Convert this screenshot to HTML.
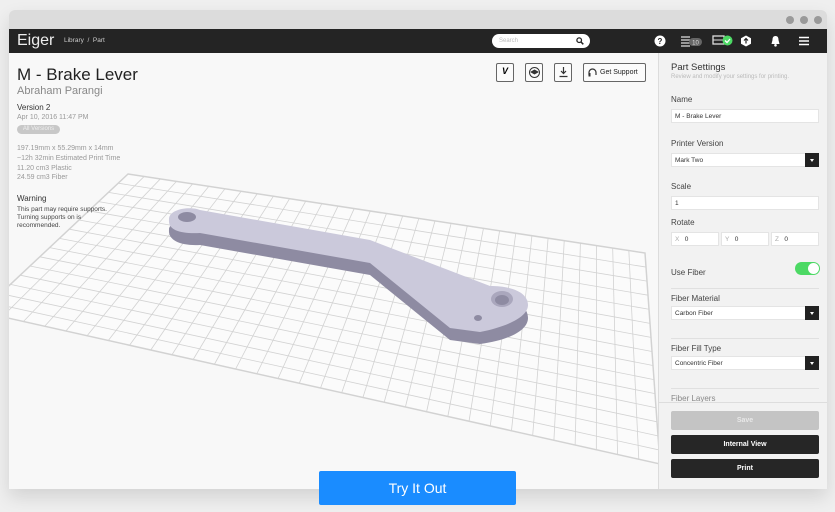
<!DOCTYPE html>
<html><head><meta charset="utf-8"><style>
*{margin:0;padding:0;box-sizing:border-box}
body{width:835px;height:512px;background:#efefef;font-family:"Liberation Sans",sans-serif;position:relative;overflow:hidden}
.win{position:absolute;left:9px;top:10px;width:818px;height:479px;background:#f8f8f8;border-radius:6px 6px 0 0;overflow:hidden;box-shadow:0 8px 18px rgba(0,0,0,.12)}
.title{position:absolute;left:0;top:0;width:818px;height:19px;background:#dcdcdc}
.dot{position:absolute;top:6px;width:8px;height:8px;border-radius:50%;background:#9a9a9a}
.nav{position:absolute;left:0;top:19px;width:818px;height:24px;background:#242424;color:#fff}
.a{position:absolute;white-space:nowrap}
.panel{position:absolute;left:649px;top:43px;width:169px;height:436px;background:#f2f2f2;border-left:1px solid #dcdcdc}
.lbl{position:absolute;left:12px;font-size:8px;color:#444}
.inp{position:absolute;left:12px;width:148px;height:14px;background:#fff;border:1px solid #e4e4e4;font-size:6.5px;color:#333;padding:3px 3px}
.arr{position:absolute;right:-1px;top:-1px;width:14px;height:14px;background:#222}
.arr:after{content:"";position:absolute;left:5px;top:6px;border:2px solid transparent;border-top:3px solid #fff}
.hr{position:absolute;left:12px;width:148px;height:1px;background:#e0e0e0}
.btn{position:absolute;left:12px;width:148px;height:19px;font-size:7px;color:#fff;text-align:center;line-height:19px;font-weight:bold;border-radius:2px}
.tb{position:absolute;top:53px;width:18px;height:19px;border:1px solid #666;border-radius:2px;background:#fbfbfb}
.g{font-size:7px;color:#999}
</style></head><body>
<div class="win">
<div class="title"><div class="dot" style="left:777px"></div><div class="dot" style="left:791px"></div><div class="dot" style="left:805px"></div></div>
<div class="nav">
<div class="a" style="left:8px;top:3px;font-size:16px;color:#eee">Eiger</div>
<div class="a" style="left:55px;top:8px;font-size:6.5px;color:#ccc">Library &nbsp;/&nbsp; Part</div>
<div class="a" style="left:483px;top:5px;width:98px;height:14px;background:#fff;border-radius:7px;font-size:6px;color:#bbb;padding:4px 7px">Search
<svg style="position:absolute;right:6px;top:3px" width="8" height="8" viewBox="0 0 8 8"><circle cx="3.2" cy="3.2" r="2.3" fill="none" stroke="#222" stroke-width="1.3"/><path d="M5 5L7.3 7.3" stroke="#222" stroke-width="1.5"/></svg></div>
<svg class="a" style="left:645px;top:6px" width="12" height="12"><circle cx="6" cy="6" r="5.5" fill="#fff"/><text x="6" y="9" font-size="8" font-weight="bold" text-anchor="middle" fill="#222" font-family="Liberation Sans">?</text></svg>
<svg class="a" style="left:671px;top:6px" width="24" height="12"><path d="M1 2h9M1 5h9M1 8h9M1 11h9" stroke="#ddd" stroke-width="1.3"/><rect x="9" y="3" width="13" height="8" rx="4" fill="#666"/><text x="15.5" y="9.5" font-size="6" text-anchor="middle" fill="#ddd" font-family="Liberation Sans">10</text></svg>
<svg class="a" style="left:703px;top:5px" width="22" height="13"><rect x="1" y="2" width="11" height="8" fill="none" stroke="#ddd" stroke-width="1.3"/><path d="M1 6h11" stroke="#ddd"/><circle cx="15.5" cy="6.5" r="5" fill="#4cd964"/><path d="M13 6.5l2 2 3-3.5" stroke="#fff" stroke-width="1.3" fill="none"/></svg>
<svg class="a" style="left:731px;top:6px" width="12" height="12"><path d="M6 0.5L11 3.2V8.8L6 11.5L1 8.8V3.2Z" fill="#fff"/><path d="M6 3.5v5M4 5.5l2-2 2 2" stroke="#222" stroke-width="1.2" fill="none"/></svg>
<svg class="a" style="left:761px;top:6px" width="11" height="12"><path d="M5.5 1C3 1 2.5 3 2.5 5L1.5 9H9.5L8.5 5C8.5 3 8 1 5.5 1Z" fill="#fff"/><circle cx="5.5" cy="10.3" r="1.3" fill="#fff"/></svg>
<svg class="a" style="left:790px;top:7px" width="10" height="10"><path d="M0 1.5h10M0 5h10M0 8.5h10" stroke="#fff" stroke-width="1.6"/></svg>
</div>

<svg class="a" style="left:0;top:43px" width="650" height="436"><g transform="translate(-9,-53)">
<polygon points="128,174 645,253 660,464 -19,312" fill="#fbfbfb" stroke="#d4d4d4" stroke-width="1.5"/>
<g id="gl" stroke="#d2d2d2" stroke-width="0.8"></g>
<path d="M169,230 C168,221 190,219 200,222 L 370,252 L 490,298 C515,298 528,306 528,318 C528,330 510,340 480,344 L 450,340 L 370,275 L 200,245 C180,246 168,240 169,230 Z" fill="#8e8ba2"/>
<path d="M169,220 C168,209 190,206 200,210 L 370,240 L 490,286 C515,286 528,294 528,305 C528,316 510,326 480,332 L 450,328 L 370,263 L 200,233 C180,234 168,230 169,220 Z" fill="#cbc9db"/>
<ellipse cx="187" cy="217" rx="9" ry="5" fill="#8e8ba2"/><ellipse cx="502" cy="299" rx="11" ry="8" fill="#aaa7bd"/><ellipse cx="502" cy="300" rx="7" ry="5" fill="#8e8ba2"/><ellipse cx="478" cy="318" rx="4" ry="3" fill="#8e8ba2"/>
</g></svg>

<div class="a" style="left:8px;top:55px;font-size:17px;color:#222">M - Brake Lever</div>
<div class="a" style="left:8px;top:75px;font-size:11px;color:#888">Abraham Parangi</div>
<div class="a" style="left:8px;top:93px;font-size:8px;color:#333">Version 2</div>
<div class="a g" style="left:8px;top:104px">Apr 10, 2016 11:47 PM</div>
<div class="a" style="left:8px;top:115px;width:43px;height:9px;border-radius:5px;background:#c8c8c8;color:#eee;font-size:6px;text-align:center;line-height:9px">All Versions</div>
<div class="a g" style="left:8px;top:134px;line-height:9.8px">197.19mm x 55.29mm x 14mm<br>~12h 32min Estimated Print Time<br>11.20 cm3 Plastic<br>24.59 cm3 Fiber</div>
<div class="a" style="left:8px;top:184px;font-size:8px;color:#333">Warning</div>
<div class="a" style="left:8px;top:196px;font-size:6.5px;color:#444;line-height:8px">This part may require supports.<br>Turning supports on is<br>recommended.</div>

<div class="tb" style="left:487px"><span style="position:absolute;left:5px;top:2px;font-size:9px;font-weight:bold;font-style:italic">V</span></div>
<div class="tb" style="left:516px"><svg style="position:absolute;left:3px;top:3px" width="11" height="11"><circle cx="5.5" cy="5.5" r="5" fill="none" stroke="#333"/><path d="M1 5l4.5-2.5 4.5 2.5-4.5 2.5z" fill="#333"/></svg></div>
<div class="tb" style="left:545px"><svg style="position:absolute;left:4px;top:3px" width="9" height="11"><path d="M4.5 0v6M2 4l2.5 2.5L7 4M0.5 9.5h8" stroke="#333" stroke-width="1.2" fill="none"/></svg></div>
<div class="tb" style="left:574px;width:63px;font-size:7px;line-height:17px;padding-left:16px;color:#222">Get Support<svg style="position:absolute;left:4px;top:4px" width="9" height="9"><path d="M1 7V4.5a3.5 3.5 0 0 1 7 0V7" fill="none" stroke="#333" stroke-width="1.2"/><rect x="0.5" y="5" width="2" height="3.5" fill="#333"/></svg></div>

<div class="panel">
<div class="a" style="left:12px;top:9px;font-size:9.5px;color:#333">Part Settings</div>
<div class="a" style="left:12px;top:21px;font-size:6px;color:#bbb">Review and modify your settings for printing.</div>
<div class="lbl" style="top:42px">Name</div>
<div class="inp" style="top:56px">M - Brake Lever</div>
<div class="lbl" style="top:86px">Printer Version</div>
<div class="inp" style="top:100px">Mark Two<div class="arr"></div></div>
<div class="lbl" style="top:129px">Scale</div>
<div class="inp" style="top:143px">1</div>
<div class="lbl" style="top:165px">Rotate</div>
<div class="inp" style="top:179px;width:48px;color:#333"><span style="color:#aaa">X</span>&nbsp;&nbsp;&nbsp;0</div>
<div class="inp" style="top:179px;left:62px;width:48px"><span style="color:#aaa">Y</span>&nbsp;&nbsp;&nbsp;0</div>
<div class="inp" style="top:179px;left:112px;width:48px"><span style="color:#aaa">Z</span>&nbsp;&nbsp;&nbsp;0</div>
<div class="lbl" style="top:215px">Use Fiber</div>
<div class="a" style="left:136px;top:209px;width:25px;height:13px;border-radius:7px;background:#4cd964"><div style="position:absolute;right:1px;top:1px;width:11px;height:11px;border-radius:50%;background:#fff"></div></div>
<div class="hr" style="top:235px"></div>
<div class="lbl" style="top:241px">Fiber Material</div>
<div class="inp" style="top:253px">Carbon Fiber<div class="arr"></div></div>
<div class="hr" style="top:285px"></div>
<div class="lbl" style="top:291px">Fiber Fill Type</div>
<div class="inp" style="top:303px">Concentric Fiber<div class="arr"></div></div>
<div class="hr" style="top:335px"></div>
<div class="lbl" style="top:341px;color:#888">Fiber Layers</div>
<div class="a" style="left:0;top:349px;width:169px;height:87px;background:#f2f2f2;border-top:1px solid #ddd"></div>
<div class="btn" style="top:358px;background:#c4c4c4;color:#e8e8e8">Save</div>
<div class="btn" style="top:382px;background:#262626">Internal View</div>
<div class="btn" style="top:406px;background:#262626">Print</div>
</div>
</div>
<div class="a" style="left:319px;top:471px;width:197px;height:34px;background:#1a8cff;border-radius:2px;color:#fff;font-size:14px;text-align:center;line-height:34px">Try It Out</div>
<script>
var A=[128,174],B=[645,253],C=[660,464],D=[-19,312],g=document.getElementById('gl'),s='';
function P(u,v){return[(1-u)*(1-v)*A[0]+u*(1-v)*B[0]+u*v*C[0]+(1-u)*v*D[0],(1-u)*(1-v)*A[1]+u*(1-v)*B[1]+u*v*C[1]+(1-u)*v*D[1]];}
var nu=32,nv=15;
for(var i=0;i<=nu;i++){var p=P(i/nu,0),q=P(i/nu,1);s+='<line x1="'+p[0]+'" y1="'+p[1]+'" x2="'+q[0]+'" y2="'+q[1]+'"/>';}
for(var j=0;j<=nv;j++){var p=P(0,j/nv),q=P(1,j/nv);s+='<line x1="'+p[0]+'" y1="'+p[1]+'" x2="'+q[0]+'" y2="'+q[1]+'"/>';}
g.innerHTML=s;
</script>
</body></html>
